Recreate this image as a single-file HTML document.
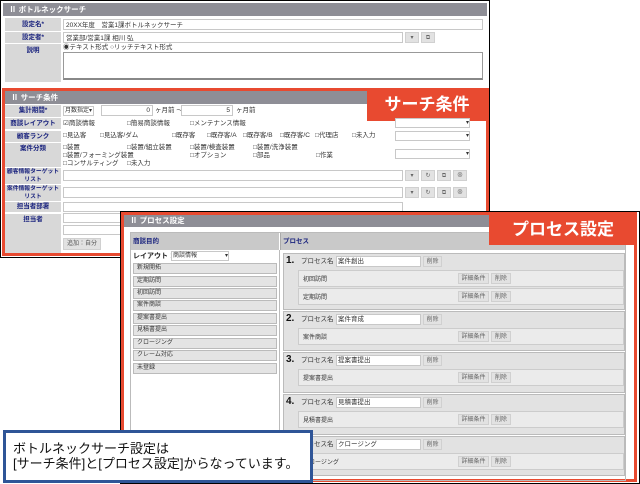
<!DOCTYPE html>
<html><head><meta charset="utf-8"><style>
*{box-sizing:border-box;margin:0;padding:0}
body{width:640px;height:484px;position:relative;overflow:hidden;background:#fff;font-family:"Liberation Sans","Noto Sans CJK JP",sans-serif;font-size:6.5px;color:#333}
.a{position:absolute}
.hd{background:#8e8e96;color:#fff;font-weight:bold;font-size:7.5px;line-height:13px;padding-left:6px}
.lb{background:#d8d8d8;color:#1a237e;font-weight:bold;text-align:center;font-size:6.5px;white-space:nowrap;overflow:hidden}
.in{background:#fff;border:1px solid #c8c8c8}
.bt{background:#e2e2e2;border:1px solid #d0d0d0;font-size:6px;color:#666;text-align:center;line-height:11px}
.t{position:absolute;white-space:nowrap;line-height:9px}
.big{background:#e84a30;color:#fff;font-weight:bold;font-size:17px;text-align:center}
.li{position:absolute;left:133px;width:144px;height:11px;background:#e4e4e4;border:1px solid #bbb;font-size:6px;line-height:9px;padding-left:3px}
.pb{position:absolute;left:283px;width:342px;background:#e2e2e2;border:1px solid #bbb}
.sr{position:absolute;left:14px;width:326px;height:17px;background:#ebebeb;border:1px solid #ccc;font-size:6px;padding:3px 4px}
</style></head><body>
<!-- top panel -->
<div class="a" style="left:0;top:0;width:490px;height:258px;border:1.5px solid #000"></div>
<div class="a hd" style="left:3px;top:3px;width:484px;height:13px">Ⅱ ボトルネックサーチ</div>
<div class="a lb" style="left:5px;top:18px;width:56px;height:13px;line-height:13px">設定名*</div>
<div class="a in" style="left:63px;top:19px;width:420px;height:11px"><span class="t" style="left:2px;top:1px">20XX年度　営業1課ボトルネックサーチ</span></div>
<div class="a lb" style="left:5px;top:32px;width:56px;height:11px;line-height:11px">設定者*</div>
<div class="a in" style="left:63px;top:32px;width:340px;height:11px"><span class="t" style="left:2px;top:1px">営業部/営業1課 相川 弘</span></div>
<div class="a bt" style="left:405px;top:32px;width:14px;height:11px">▾</div>
<div class="a bt" style="left:421px;top:32px;width:14px;height:11px">⧉</div>
<div class="a lb" style="left:5px;top:44px;width:56px;height:38px;line-height:9px;padding-top:2px">説明</div>
<span class="t" style="left:63px;top:43px">◉テキスト形式 ○リッチテキスト形式</span>
<div class="a in" style="left:63px;top:52px;width:420px;height:28px;border-color:#999;border-bottom:2px solid #888"></div>

<!-- search panel -->
<div class="a" style="left:2px;top:88px;width:487px;height:168px;border:3px solid #e84a30"></div>
<div class="a hd" style="left:5px;top:91px;width:481px;height:13px">Ⅱ サーチ条件</div>
<div class="a big" style="left:367px;top:88px;width:120px;height:33px;line-height:33px">サーチ条件</div>
<div class="a lb" style="left:5px;top:105px;width:56px;height:12px;line-height:12px">集計期間*</div>
<div class="a in" style="left:63px;top:106px;width:31px;height:10px;font-size:6px;line-height:8px;padding-left:1px">月数指定▾</div>
<div class="a in" style="left:101px;top:105px;width:52px;height:11px;text-align:right;padding-right:2px;line-height:9px">0</div>
<span class="t" style="left:155px;top:106px">ヶ月前 ～</span>
<div class="a in" style="left:181px;top:105px;width:52px;height:11px;text-align:right;padding-right:2px;line-height:9px">5</div>
<span class="t" style="left:236px;top:106px">ヶ月前</span>
<div class="a lb" style="left:5px;top:118px;width:56px;height:11px;line-height:11px">商談レイアウト</div>
<span class="t" style="left:63px;top:119px">☑商談情報</span><span class="t" style="left:127px;top:119px">□簡易商談情報</span><span class="t" style="left:190px;top:119px">□メンテナンス情報</span>
<div class="a in" style="left:395px;top:118px;width:75px;height:10px;text-align:right;font-size:6px;line-height:8px">▾</div>
<div class="a lb" style="left:5px;top:131px;width:56px;height:11px;line-height:11px">顧客ランク</div>
<span class="t" style="left:63px;top:131px">□見込客</span><span class="t" style="left:100px;top:131px">□見込客/ダム</span><span class="t" style="left:172px;top:131px">□既存客</span><span class="t" style="left:207px;top:131px">□既存客/A</span><span class="t" style="left:243px;top:131px">□既存客/B</span><span class="t" style="left:280px;top:131px">□既存客/C</span><span class="t" style="left:315px;top:131px">□代理店</span><span class="t" style="left:352px;top:131px">□未入力</span>
<div class="a in" style="left:395px;top:131px;width:75px;height:10px;text-align:right;font-size:6px;line-height:8px">▾</div>
<div class="a lb" style="left:5px;top:143px;width:56px;height:24px;line-height:9px;padding-top:1px">案件分類</div>
<span class="t" style="left:63px;top:143px">□装置</span><span class="t" style="left:127px;top:143px">□装置/組立装置</span><span class="t" style="left:190px;top:143px">□装置/検査装置</span><span class="t" style="left:253px;top:143px">□装置/洗浄装置</span>
<span class="t" style="left:63px;top:151px">□装置/フォーミング装置</span><span class="t" style="left:190px;top:151px">□オプション</span><span class="t" style="left:253px;top:151px">□部品</span><span class="t" style="left:316px;top:151px">□作業</span>
<span class="t" style="left:63px;top:159px">□コンサルティング</span><span class="t" style="left:127px;top:159px">□未入力</span>
<div class="a in" style="left:395px;top:149px;width:75px;height:10px;text-align:right;font-size:6px;line-height:8px">▾</div>
<div class="a lb" style="left:5px;top:168px;width:56px;height:16px;line-height:7.5px;padding-top:1px;font-size:5.8px">顧客情報ターゲット<br>リスト</div>
<div class="a in" style="left:63px;top:170px;width:340px;height:11px"></div>
<div class="a bt" style="left:405px;top:170px;width:14px;height:11px">▾</div><div class="a bt" style="left:421px;top:170px;width:14px;height:11px">↻</div><div class="a bt" style="left:437px;top:170px;width:14px;height:11px">⧉</div><div class="a bt" style="left:453px;top:170px;width:14px;height:11px">⊗</div>
<div class="a lb" style="left:5px;top:185px;width:56px;height:16px;line-height:7.5px;padding-top:1px;font-size:5.8px">案件情報ターゲット<br>リスト</div>
<div class="a in" style="left:63px;top:187px;width:340px;height:11px"></div>
<div class="a bt" style="left:405px;top:187px;width:14px;height:11px">▾</div><div class="a bt" style="left:421px;top:187px;width:14px;height:11px">↻</div><div class="a bt" style="left:437px;top:187px;width:14px;height:11px">⧉</div><div class="a bt" style="left:453px;top:187px;width:14px;height:11px">⊗</div>
<div class="a lb" style="left:5px;top:202px;width:56px;height:10px;line-height:10px">担当者部署</div>
<div class="a in" style="left:63px;top:202px;width:340px;height:10px"></div>
<div class="a lb" style="left:5px;top:214px;width:56px;height:39px;line-height:9px;padding-top:1px">担当者</div>
<div class="a in" style="left:63px;top:213px;width:120px;height:10px"></div>
<div class="a in" style="left:63px;top:225px;width:120px;height:10px"></div>
<div class="a bt" style="left:63px;top:238px;width:38px;height:12px;color:#555">追加：自分</div>

<!-- process panel -->
<div class="a" style="left:120px;top:211px;width:520px;height:273px;border:1.5px solid #000;background:#fff"></div>
<div class="a" style="left:121px;top:212px;width:516px;height:270px;border:3px solid #e84a30"></div>
<div class="a hd" style="left:124px;top:215px;width:510px;height:12px;line-height:12px">Ⅱ プロセス設定</div>
<div class="a" style="left:130px;top:232px;width:496px;height:249px;border:1px solid #bbb"></div>
<div class="a" style="left:131px;top:233px;width:148px;height:17px;background:#c9c9c9;color:#1a237e;font-weight:bold;line-height:17px;padding-left:2px">商談目的</div>
<div class="a" style="left:280px;top:233px;width:345px;height:17px;background:#c9c9c9;color:#1a237e;font-weight:bold;line-height:17px;padding-left:2px;border-left:1px solid #aaa">プロセス</div>
<div class="a" style="left:279px;top:250px;width:1px;height:231px;background:#bbb"></div>
<span class="t" style="left:133px;top:252px;font-weight:bold;color:#222;font-size:7px">レイアウト：</span>
<div class="a in" style="left:171px;top:251px;width:58px;height:10px;font-size:6px;line-height:8px;padding-left:1px">商談情報<span style="float:right">▾</span></div>
<div class="li" style="top:263px">新規開拓</div><div class="li" style="top:276px">定期訪問</div><div class="li" style="top:288px">初回訪問</div><div class="li" style="top:300px">案件商談</div><div class="li" style="top:313px">提案書提出</div><div class="li" style="top:325px">見積書提出</div><div class="li" style="top:338px">クロージング</div><div class="li" style="top:350px">クレーム対応</div><div class="li" style="top:363px">未登録</div>
<div class="a big" style="left:489px;top:214px;width:148px;height:31px;line-height:31px">プロセス設定</div>

<div class="pb" style="top:253px;height:57px"><span class="t" style="left:2px;top:2px;font-weight:bold;font-size:10px;color:#111">1.</span><span class="t" style="left:17px;top:3px">プロセス名：</span><div class="a in" style="left:52px;top:2px;width:85px;height:11px;padding-left:1px;line-height:9px">案件創出</div><div class="a bt" style="left:139px;top:2px;width:19px;height:11px">削除</div>
<div class="sr" style="top:16px">初回訪問<div class="a bt" style="left:159px;top:2px;width:31px;height:11px">詳細条件</div><div class="a bt" style="left:192px;top:2px;width:20px;height:11px">削除</div></div>
<div class="sr" style="top:34px">定期訪問<div class="a bt" style="left:159px;top:2px;width:31px;height:11px">詳細条件</div><div class="a bt" style="left:192px;top:2px;width:20px;height:11px">削除</div></div></div>

<div class="pb" style="top:311px;height:40px"><span class="t" style="left:2px;top:2px;font-weight:bold;font-size:10px;color:#111">2.</span><span class="t" style="left:17px;top:3px">プロセス名：</span><div class="a in" style="left:52px;top:2px;width:85px;height:11px;padding-left:1px;line-height:9px">案件育成</div><div class="a bt" style="left:139px;top:2px;width:19px;height:11px">削除</div>
<div class="sr" style="top:16px">案件商談<div class="a bt" style="left:159px;top:2px;width:31px;height:11px">詳細条件</div><div class="a bt" style="left:192px;top:2px;width:20px;height:11px">削除</div></div></div>

<div class="pb" style="top:352px;height:41px"><span class="t" style="left:2px;top:2px;font-weight:bold;font-size:10px;color:#111">3.</span><span class="t" style="left:17px;top:3px">プロセス名：</span><div class="a in" style="left:52px;top:2px;width:85px;height:11px;padding-left:1px;line-height:9px">提案書提出</div><div class="a bt" style="left:139px;top:2px;width:19px;height:11px">削除</div>
<div class="sr" style="top:16px">提案書提出<div class="a bt" style="left:159px;top:2px;width:31px;height:11px">詳細条件</div><div class="a bt" style="left:192px;top:2px;width:20px;height:11px">削除</div></div></div>

<div class="pb" style="top:394px;height:41px"><span class="t" style="left:2px;top:2px;font-weight:bold;font-size:10px;color:#111">4.</span><span class="t" style="left:17px;top:3px">プロセス名：</span><div class="a in" style="left:52px;top:2px;width:85px;height:11px;padding-left:1px;line-height:9px">見積書提出</div><div class="a bt" style="left:139px;top:2px;width:19px;height:11px">削除</div>
<div class="sr" style="top:16px">見積書提出<div class="a bt" style="left:159px;top:2px;width:31px;height:11px">詳細条件</div><div class="a bt" style="left:192px;top:2px;width:20px;height:11px">削除</div></div></div>

<div class="pb" style="top:436px;height:40px"><span class="t" style="left:2px;top:2px;font-weight:bold;font-size:10px;color:#111">5.</span><span class="t" style="left:17px;top:3px">プロセス名：</span><div class="a in" style="left:52px;top:2px;width:85px;height:11px;padding-left:1px;line-height:9px">クロージング</div><div class="a bt" style="left:139px;top:2px;width:19px;height:11px">削除</div>
<div class="sr" style="top:16px">クロージング<div class="a bt" style="left:159px;top:2px;width:31px;height:11px">詳細条件</div><div class="a bt" style="left:192px;top:2px;width:20px;height:11px">削除</div></div></div>

<!-- callout -->
<div class="a" style="left:3px;top:430px;width:310px;height:53px;border:3px solid #2f5597;background:#fff;font-size:13px;color:#111;line-height:15px;padding:8px 0 0 7px;white-space:nowrap">ボトルネックサーチ設定は<br>[サーチ条件]と[プロセス設定]からなっています。</div>
</body></html>
